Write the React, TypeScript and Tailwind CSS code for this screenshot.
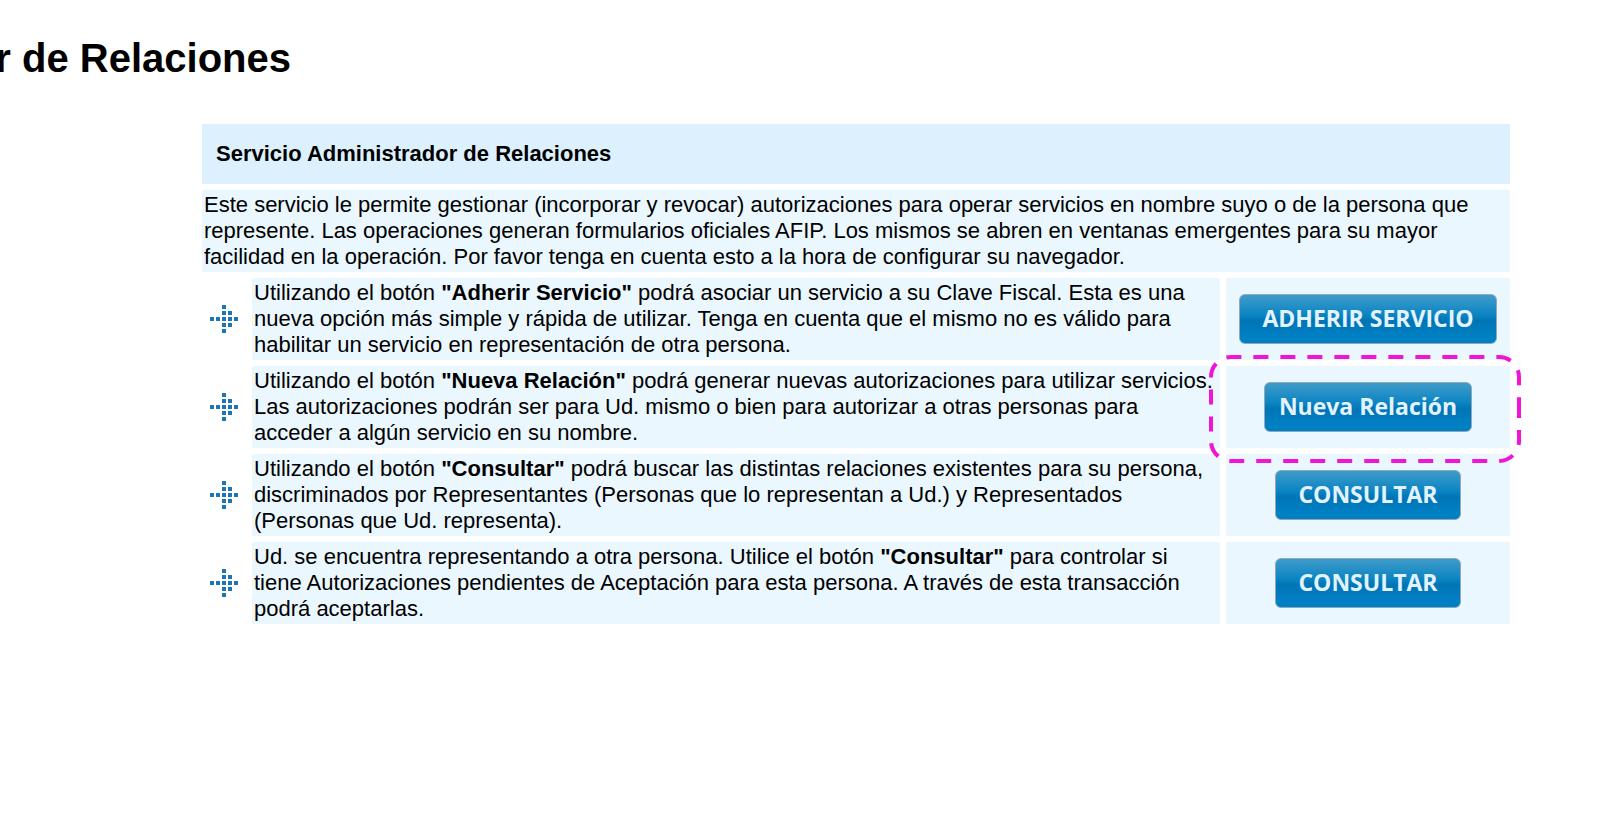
import type { ReactNode } from 'react';

interface Operation {
  id: string;
  description: ReactNode;
  action: string;
  buttonClass: string;
  highlighted?: boolean;
}

const operations: Operation[] = [
  {
    id: 'adherir',
    description: (
      <>
        Utilizando el botón <b>"Adherir Servicio"</b> podrá asociar un servicio a su Clave Fiscal. Esta es una nueva
        opción más simple y rápida de utilizar. Tenga en cuenta que el mismo no es válido para habilitar un servicio en
        representación de otra persona.
      </>
    ),
    action: 'ADHERIR SERVICIO',
    buttonClass: 'w-[258px]',
  },
  {
    id: 'nueva',
    description: (
      <>
        Utilizando el botón <b>"Nueva Relación"</b> podrá generar nuevas autorizaciones para utilizar servicios. Las
        autorizaciones podrán ser para Ud. mismo o bien para autorizar a otras personas para acceder a algún servicio en
        su nombre.
      </>
    ),
    action: 'Nueva Relación',
    buttonClass: 'w-[208px]',
    highlighted: true,
  },
  {
    id: 'consultar',
    description: (
      <>
        Utilizando el botón <b>"Consultar"</b> podrá buscar las distintas relaciones existentes para su persona,
        discriminados por Representantes (Personas que lo representan a Ud.) y Representados (Personas que Ud.
        representa).
      </>
    ),
    action: 'CONSULTAR',
    buttonClass: 'w-[186px]',
  },
  {
    id: 'pendientes',
    description: (
      <>
        Ud. se encuentra representando a otra persona. Utilice el botón <b>"Consultar"</b> para controlar si tiene
        Autorizaciones pendientes de Aceptación para esta persona. A través de esta transacción podrá aceptarlas.
      </>
    ),
    action: 'CONSULTAR',
    buttonClass: 'w-[186px]',
  },
];

// Dotted arrow, one entry per square
const dots = [
  [12, 0],
  [12, 6], [18, 6],
  [0, 12], [6, 12], [12, 12], [18, 12], [24, 12],
  [12, 18], [18, 18],
  [12, 24],
];

function ArrowIcon() {
  return (
    <svg width="28" height="28" viewBox="0 0 28 28" aria-hidden="true">
      {dots.map(([x, y]) => (
        <rect key={`${x}-${y}`} x={x} y={y} width="4" height="4" fill="#1b75b6" />
      ))}
    </svg>
  );
}

function Highlight() {
  return (
    <svg
      className="pointer-events-none absolute -top-[11px] -left-[17px] z-10"
      width="312"
      height="108"
      viewBox="0 0 312 108"
      fill="none"
      aria-hidden="true"
    >
      <path
        d="M310 48V86a20 20 0 0 1-20 20H22a20 20 0 0 1-20-20V22a20 20 0 0 1 20-20H290a20 20 0 0 1 20 20V48"
        stroke="#f013d8"
        strokeWidth="4"
        strokeDasharray="15 12"
      />
    </svg>
  );
}

export default function App() {
  return (
    <main className="overflow-hidden bg-white pb-8 font-['Liberation_Sans',Arial,sans-serif] text-black">
      {/* The title is wider than the visible area and runs off the left edge */}
      <div className="flex w-[291px] justify-end pt-[35px]">
        <h1 className="shrink-0 whitespace-nowrap text-[40px] leading-[46px] font-bold">Administrador de Relaciones</h1>
      </div>

      <section className="mt-[43px] mr-[98px] ml-[202px] flex flex-col gap-1.5">
        <h2 className="bg-[#dcf0fe] px-3.5 py-[17px] text-[22px] leading-[26px] font-bold">
          Servicio Administrador de Relaciones
        </h2>
        <p className="bg-[#eaf7fe] p-0.5 text-[22px] leading-[26px]">
          Este servicio le permite gestionar (incorporar y revocar) autorizaciones para operar servicios en nombre suyo o
          de la persona que represente. Las operaciones generan formularios oficiales AFIP. Los mismos se abren en
          ventanas emergentes para su mayor facilidad en la operación. Por favor tenga en cuenta esto a la hora de
          configurar su navegador.
        </p>

        {operations.map((op) => (
          <div key={op.id} className="grid grid-cols-[44px_1fr_284px] gap-1.5">
            <div className="flex items-center justify-center">
              <ArrowIcon />
            </div>
            <p className="bg-[#eaf7fe] p-0.5 text-[22px] leading-[26px]">{op.description}</p>
            <div className="relative flex items-center justify-center bg-[#eaf7fe]">
              <button
                type="button"
                className={`${op.buttonClass} h-[50px] rounded-md border border-[#8fa9b8] bg-[linear-gradient(to_bottom,#3c9aca_4%,#0a84c2_42%,#0074b4_54%,#0080c4_85%)] pb-0.5 font-['Open_Sans','Noto_Sans',sans-serif] text-[23px] font-bold text-[#e2f3ff]`}
              >
                {op.action}
              </button>
              {op.highlighted && <Highlight />}
            </div>
          </div>
        ))}
      </section>
    </main>
  );
}
